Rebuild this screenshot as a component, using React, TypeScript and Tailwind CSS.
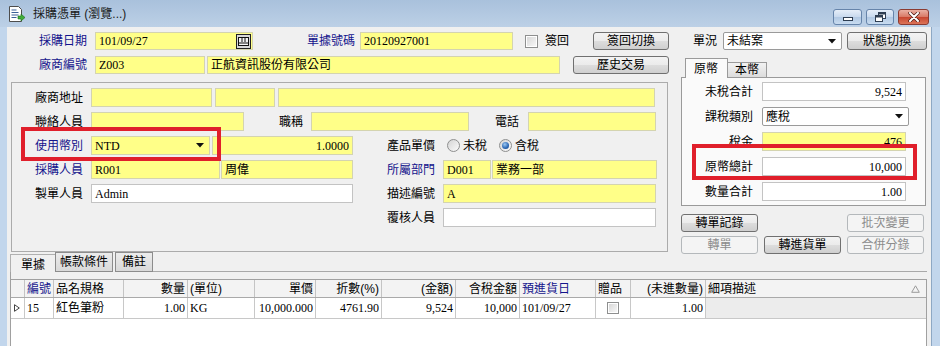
import React from "react";

const sans = "font-['Liberation_Sans','Noto_Sans_CJK_TC',sans-serif]";
const serif = "font-['Liberation_Serif','Noto_Sans_CJK_TC',serif]";
const btnBg = "bg-[linear-gradient(#f3f3f3_0%,#ebebeb_50%,#dddddd_51%,#cfcfcf_100%)]";

function Label({ w, blue, children }: { w: string; blue?: boolean; children?: React.ReactNode }) {
  return (
    <div className={`${w} shrink-0 text-right leading-none whitespace-nowrap ${blue ? "text-[#14148c]" : "text-black"}`}>
      {children}
    </div>
  );
}

function Field({
  w,
  white,
  right,
  ml = "",
  children,
}: {
  w: string;
  white?: boolean;
  right?: boolean;
  ml?: string;
  children?: React.ReactNode;
}) {
  return (
    <div
      className={`${w} ${ml} h-full shrink-0 border flex items-center px-[3px] overflow-hidden whitespace-nowrap leading-none ${serif} ${
        white ? "bg-white border-[#c3c3c3]" : "bg-[#ffff88] border-[#d4d4b0]"
      } ${right ? "justify-end" : ""}`}
    >
      {children}
    </div>
  );
}

function Arrow() {
  return (
    <svg width="8" height="5" viewBox="0 0 8 5" className="shrink-0">
      <path d="M0 0h8L4 4.5z" fill="#111" />
    </svg>
  );
}

function Select({ w, white, ml = "", children }: { w: string; white?: boolean; ml?: string; children?: React.ReactNode }) {
  return (
    <div
      className={`${w} ${ml} h-full shrink-0 border flex items-center pl-[3px] pr-[5px] leading-none ${serif} ${
        white ? "bg-white border-[#9a9a9a] rounded-[2px]" : "bg-[#ffff88] border-[#d4d4b0]"
      }`}
    >
      <span className="flex-1 whitespace-nowrap">{children}</span>
      <Arrow />
    </div>
  );
}

function Btn({ w, ml = "", disabled, children }: { w: string; ml?: string; disabled?: boolean; children: React.ReactNode }) {
  return (
    <div
      className={`${w} ${ml} h-[18px] shrink-0 rounded-[3px] border flex items-center justify-center leading-none whitespace-nowrap ${
        disabled ? "border-[#b4b8bb] bg-[#f4f4f4] text-[#8c8c8c]" : `border-[#707070] ${btnBg} text-black`
      }`}
    >
      {children}
    </div>
  );
}

function Radio({ on }: { on?: boolean }) {
  return (
    <span className="w-[13px] h-[13px] shrink-0 rounded-full border border-[#8e8f8f] bg-[linear-gradient(135deg,#d4d4d4,#fbfbfb)] flex items-center justify-center">
      {on && <span className="w-[7px] h-[7px] rounded-full bg-[radial-gradient(circle_at_40%_35%,#9cc8f2,#2a66b3_60%,#123e7a)]" />}
    </span>
  );
}

function Check({ size = "w-[13px] h-[13px]" }: { size?: string }) {
  return (
    <span className={`${size} shrink-0 border border-[#8e8f8f] bg-white p-[1px] flex`}>
      <span className="flex-1 bg-[linear-gradient(135deg,#d8d8d8,#f7f7f7)]" />
    </span>
  );
}

function TitleBar() {
  return (
    <div className="h-[27px] shrink-0 flex items-center bg-[linear-gradient(#a9c1dc,#bcd0e6)]">
      <svg width="18" height="16" viewBox="0 0 18 16" className="ml-[8px]">
        <path d="M1.5 0.5h9l3 3v12h-12z" fill="#fff" stroke="#4d4d4d" />
        <path d="M3.5 4h5M3.5 6.5h7M3.5 9h7M3.5 11.5h5" stroke="#3a5f98" strokeWidth="1.2" />
        <path d="M10 10h3V8l4 3.5-4 3.5v-2h-3z" fill="#3fae3a" stroke="#1d6b1a" strokeWidth="0.6" />
      </svg>
      <span className="ml-[7px] text-[12px] text-[#1b1b1b] leading-none">採購憑單 (瀏覽...)</span>
      <div className="ml-auto mr-[11px] mt-[6px] flex gap-[4px]">
        <div className="w-[29px] h-[16px] rounded-[3px] border border-[#6684aa] bg-[linear-gradient(#e6eef8,#c8d9ee_50%,#b1c8e3_51%,#c9dcf0)] flex items-end justify-center pb-[3px]">
          <span className="w-[10px] h-[4px] bg-white border border-[#2f3e52]" />
        </div>
        <div className="w-[28px] h-[16px] rounded-[3px] border border-[#6684aa] bg-[linear-gradient(#e6eef8,#c8d9ee_50%,#b1c8e3_51%,#c9dcf0)] flex items-center justify-center">
          <svg width="11" height="10" viewBox="0 0 11 10">
            <rect x="3.5" y="0.5" width="7" height="6" fill="#fff" stroke="#2f3e52" />
            <rect x="3.5" y="0.5" width="7" height="2" fill="#2f3e52" />
            <rect x="0.5" y="3.5" width="7" height="6" fill="#fff" stroke="#2f3e52" />
            <rect x="0.5" y="3.5" width="7" height="2" fill="#2f3e52" />
          </svg>
        </div>
        <div className="w-[31px] h-[16px] rounded-[3px] border border-[#8b3b31] bg-[linear-gradient(#eab0a3,#d87864_50%,#c7452f_51%,#dc7457)] flex items-center justify-center">
          <svg width="12" height="10" viewBox="0 0 12 10">
            <path d="M2 1l8 8M10 1l-8 8" stroke="#4a1a14" strokeWidth="3.4" strokeLinecap="round" />
            <path d="M2 1l8 8M10 1l-8 8" stroke="#fff" strokeWidth="2" strokeLinecap="round" />
          </svg>
        </div>
      </div>
    </div>
  );
}

function CalendarIcon() {
  return (
    <svg width="15" height="15" viewBox="0 0 15 15" className="ml-auto -mr-[2px] shrink-0">
      <rect x="0.5" y="0.5" width="14" height="14" fill="#d9d9d9" stroke="#222" />
      <rect x="2.5" y="3.5" width="10" height="8" fill="#f4f4f4" stroke="#111" />
      <path d="M6 3.5v4.5M9 3.5v4.5M2.5 9h10" stroke="#111" />
    </svg>
  );
}

function LeftTop() {
  return (
    <div className="w-[663px] shrink-0 flex flex-col">
      <div className="mt-[5px] h-[18px] flex items-center">
        <Label w="w-[80px]" blue>採購日期</Label>
        <Field w="w-[158px]" ml="ml-[8px]">
          <span>101/09/27</span>
          <CalendarIcon />
        </Field>
        <Label w="w-[102px]" blue>單據號碼</Label>
        <Field w="w-[153px]" ml="ml-[5px]">20120927001</Field>
        <span className="ml-[12px]">
          <Check />
        </span>
        <span className="ml-[7px] leading-none">簽回</span>
        <Btn w="w-[76px]" ml="ml-auto mr-[1px]">簽回切換</Btn>
      </div>

      <div className="mt-[6px] h-[18px] flex items-center">
        <Label w="w-[80px]" blue>廠商編號</Label>
        <Field w="w-[110px]" ml="ml-[8px]">Z003</Field>
        <Field w="w-[353px]" ml="ml-[2px]">正航資訊股份有限公司</Field>
        <Btn w="w-[96px]" ml="ml-auto mr-[1px]">歷史交易</Btn>
      </div>

      <div className="relative mt-[8px] ml-[4px] w-[657px] h-[170px] border border-[#ababab] pt-[5px] flex flex-col gap-[5px]">
        <div className="h-[19px] flex items-center">
          <Label w="w-[71px]">廠商地址</Label>
          <Field w="w-[121px]" ml="ml-[8px]" />
          <Field w="w-[60px]" ml="ml-[3px]" />
          <Field w="w-[377px]" ml="ml-[3px]" />
        </div>
        <div className="h-[19px] flex items-center">
          <Label w="w-[71px]">聯絡人員</Label>
          <Field w="w-[153px]" ml="ml-[8px]" />
          <Label w="w-[59px]">職稱</Label>
          <Field w="w-[158px]" ml="ml-[8px]" />
          <Label w="w-[50px]">電話</Label>
          <Field w="w-[128px]" ml="ml-[9px]" />
        </div>
        <div className="h-[19px] flex items-center">
          <Label w="w-[71px]" blue>使用幣別</Label>
          <Select w="w-[119px]" ml="ml-[8px]">NTD</Select>
          <Field w="w-[141px]" ml="ml-[2px]" right>1.0000</Field>
          <Label w="w-[82px]">產品單價</Label>
          <span className="ml-[12px]">
            <Radio />
          </span>
          <span className="ml-[3px] leading-none">未稅</span>
          <span className="ml-[12px]">
            <Radio on />
          </span>
          <span className="ml-[3px] leading-none">含稅</span>
        </div>
        <div className="h-[19px] flex items-center">
          <Label w="w-[71px]" blue>採購人員</Label>
          <Field w="w-[129px]" ml="ml-[8px]">R001</Field>
          <Field w="w-[132px]" ml="ml-[1px]">周偉</Field>
          <Label w="w-[82px]" blue>所屬部門</Label>
          <Field w="w-[48px]" ml="ml-[8px]">D001</Field>
          <Field w="w-[165px]" ml="ml-[1px]">業務一部</Field>
        </div>
        <div className="h-[19px] flex items-center">
          <Label w="w-[71px]">製單人員</Label>
          <Field w="w-[262px]" ml="ml-[8px]" white>Admin</Field>
          <Label w="w-[82px]">描述編號</Label>
          <Field w="w-[213px]" ml="ml-[8px]">A</Field>
        </div>
        <div className="h-[19px] flex items-center">
          <div className="w-[341px] shrink-0" />
          <Label w="w-[82px]">覆核人員</Label>
          <Field w="w-[213px]" ml="ml-[8px]" white />
        </div>

        <div className="absolute left-[9px] top-[44px] w-[200px] h-[34px] border-[4px] border-[#e01f2b]" />
      </div>
    </div>
  );
}

function RightTop() {
  return (
    <div className="flex-1 flex flex-col">
      <div className="mt-[5px] h-[19px] flex items-center">
        <span className="ml-[23px] leading-none">單況</span>
        <Select w="w-[119px]" ml="ml-[6px]" white>
          <span className={sans}>未結案</span>
        </Select>
        <Btn w="w-[80px]" ml="ml-[5px]">狀態切換</Btn>
      </div>

      <div className="ml-[11px] w-[245px] mt-[8px] flex flex-col">
        <div className="h-[19px] flex items-end pl-[4px]">
          <div className="w-[43px] h-[20px] -mb-[1px] relative z-10 border border-b-0 border-[#9a9a9a] bg-[#fafafa] flex items-center pl-[8px] leading-none">
            原幣
          </div>
          <div className="w-[39px] h-[15px] border border-l-0 border-b-0 border-[#9a9a9a] bg-[linear-gradient(#f2f2f2,#dcdcdc)] flex items-center justify-center leading-none">
            本幣
          </div>
        </div>
        <div className="relative h-[129px] border border-[#9a9a9a] bg-[#fafafa] pt-[4px] flex flex-col gap-[6px]">
          <div className="h-[19px] flex items-center">
            <Label w="w-[71px]">未稅合計</Label>
            <Field w="w-[144px]" ml="ml-[9px]" white right>9,524</Field>
          </div>
          <div className="h-[19px] flex items-center">
            <Label w="w-[71px]">課稅類別</Label>
            <Select w="w-[147px]" ml="ml-[9px]" white>
              <span className={sans}>應稅</span>
            </Select>
          </div>
          <div className="h-[19px] flex items-center">
            <Label w="w-[71px]">稅金</Label>
            <Field w="w-[144px]" ml="ml-[9px]" right>476</Field>
          </div>
          <div className="h-[19px] flex items-center">
            <Label w="w-[71px]">原幣總計</Label>
            <Field w="w-[144px]" ml="ml-[9px]" white right>10,000</Field>
          </div>
          <div className="h-[19px] flex items-center">
            <Label w="w-[71px]">數量合計</Label>
            <Field w="w-[144px]" ml="ml-[9px]" white right>1.00</Field>
          </div>
          <div className="absolute left-[10px] top-[66px] w-[225px] h-[36px] border-[4px] border-[#e01f2b]" />
        </div>

        <div className="mt-[8px] flex flex-col gap-[4px]">
          <div className="flex gap-[6px]">
            <Btn w="w-[77px]">轉單記錄</Btn>
            <div className="w-[77px]" />
            <Btn w="w-[77px]" disabled>批次變更</Btn>
          </div>
          <div className="flex gap-[6px]">
            <Btn w="w-[77px]" disabled>轉單</Btn>
            <Btn w="w-[77px]">轉進貨單</Btn>
            <Btn w="w-[77px]" disabled>合併分錄</Btn>
          </div>
        </div>
      </div>
    </div>
  );
}

type Col = { w: string; head: string; align?: "right" | "center"; blue?: boolean; val?: React.ReactNode; gray?: boolean };

const cols: Col[] = [
  { w: "w-[29px]", head: "編號", blue: true, val: "15" },
  { w: "w-[70px]", head: "品名規格", val: "紅色筆粉" },
  { w: "w-[64px]", head: "數量", align: "right", val: "1.00" },
  { w: "w-[67px]", head: "(單位)", val: "KG" },
  { w: "w-[61px]", head: "單價", align: "right", val: "10,000.000" },
  { w: "w-[66px]", head: "折數(%)", align: "right", val: "4761.90" },
  { w: "w-[74px]", head: "(金額)", align: "right", val: "9,524" },
  { w: "w-[64px]", head: "含稅金額", align: "right", val: "10,000" },
  { w: "w-[76px]", head: "預進貨日", blue: true, val: "101/09/27" },
  { w: "w-[35px]", head: "贈品", align: "center", val: <Check size="w-[12px] h-[12px]" /> },
  { w: "w-[75px]", head: "(未進數量)", align: "right", val: "1.00" },
];

function Grid() {
  return (
    <div className="flex-1 flex flex-col border-t border-r border-[#a0a0a0] bg-white">
      <div className="h-[18px] shrink-0 flex bg-[#f3f3f3] border-b border-[#a9a9a9]">
        <div className="w-[14px] shrink-0 border-r border-[#c4c4c4]" />
        {cols.map((c) => (
          <div
            key={c.head}
            className={`${c.w} shrink-0 border-r border-[#c4c4c4] px-[2px] flex items-center leading-none whitespace-nowrap ${
              c.align === "right" ? "justify-end" : ""
            } ${c.blue ? "text-[#14148c]" : ""}`}
          >
            {c.head}
          </div>
        ))}
        <div className="flex-1 px-[2px] flex items-center leading-none">
          <span>細項描述</span>
          <svg width="9" height="8" viewBox="0 0 9 8" className="ml-auto mr-[4px]">
            <path d="M4.5 0.8L8.3 7.3H0.7z" fill="none" stroke="#9a9a9a" />
          </svg>
        </div>
      </div>
      <div className="h-[21px] shrink-0 flex border-b border-[#c8c8c8]">
        <div className="w-[14px] shrink-0 border-r border-[#c8c8c8] flex items-center pl-[3px]">
          <svg width="6" height="8" viewBox="0 0 6 8">
            <path d="M0.5 0.7L5.3 4L0.5 7.3z" fill="none" stroke="#444" />
          </svg>
        </div>
        {cols.map((c) => (
          <div
            key={c.head}
            className={`${c.w} shrink-0 border-r border-[#c8c8c8] px-[2px] flex items-center leading-none whitespace-nowrap overflow-hidden ${serif} ${
              c.align === "right" ? "justify-end" : c.align === "center" ? "justify-center" : ""
            }`}
          >
            {c.val}
          </div>
        ))}
        <div className="flex-1 bg-[#ececec]" />
      </div>
      <div className="flex-1" />
    </div>
  );
}

function Bottom() {
  return (
    <div className="ml-[3px] w-[917px] flex-1 min-h-0 flex flex-col">
      <div className="h-[20px] shrink-0 flex items-end">
        <div className="w-[45px] h-[18px] border-l border-t border-[#b0b0b0] flex items-end justify-center pb-[1px] leading-none">
          單據
        </div>
        <div className="w-[58px] h-[20px] border border-[#8c8c8c] bg-[linear-gradient(#ececec,#d9d9d9)] flex items-start justify-center pt-[3px] leading-none">
          帳款條件
        </div>
        <div className="w-[38px] h-[20px] ml-[2px] border border-[#8c8c8c] bg-[linear-gradient(#ececec,#d9d9d9)] flex items-start justify-center pt-[3px] leading-none">
          備註
        </div>
        <div className="flex-1 h-full border-b border-[#a8a8a8]" />
      </div>
      <div className="flex-1 min-h-0 border-l border-[#a0a0a0] pt-[7px] flex flex-col">
        <Grid />
      </div>
    </div>
  );
}

export default function App() {
  return (
    <div className={`w-[940px] h-[346px] overflow-hidden flex flex-col bg-[#bfd4eb] text-[12px] text-black ${sans}`}>
      <TitleBar />
      <div className="flex-1 min-h-0 flex">
        <div className="w-[7px] shrink-0 bg-[#c2d6ec]" />
        <div className="flex-1 min-w-0 bg-[#f0f0f0] flex flex-col">
          <div className="h-[225px] shrink-0 flex">
            <LeftTop />
            <RightTop />
          </div>
          <Bottom />
        </div>
        <div className="w-[9px] shrink-0 bg-[#c2d6ec] border-l border-[#8ea8c4]" />
      </div>
    </div>
  );
}
